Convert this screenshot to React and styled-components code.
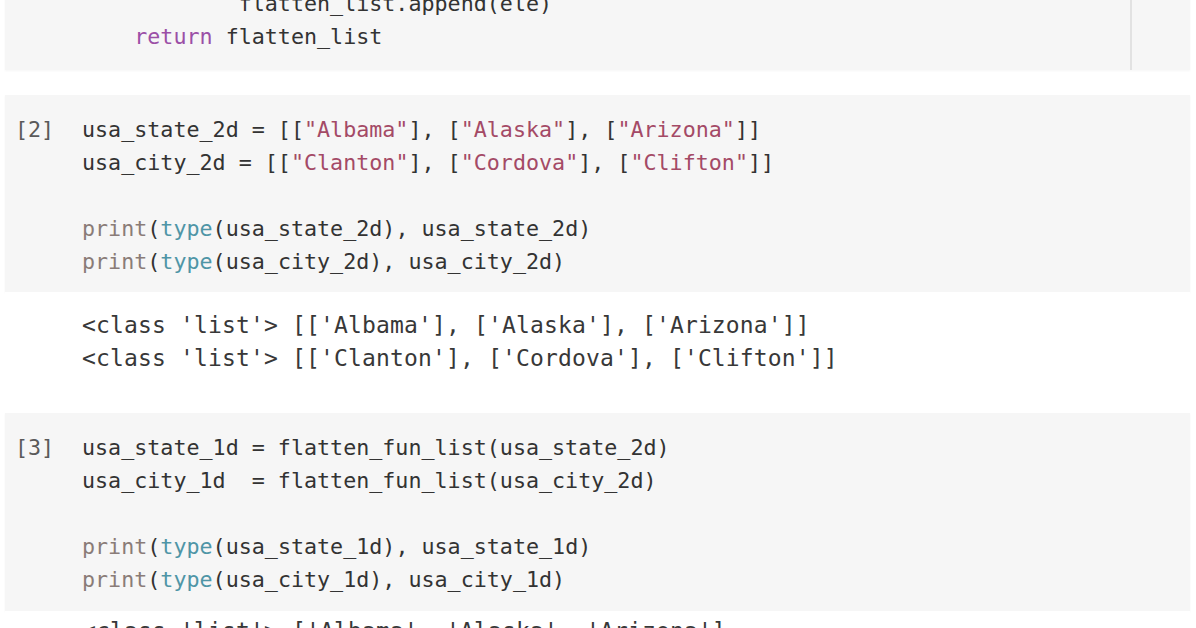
import React from 'react';
import styled, { createGlobalStyle } from 'styled-components';

const GlobalStyle = createGlobalStyle`
  html, body {
    margin: 0;
    padding: 0;
    background: #ffffff;
    overflow: hidden;
  }
`;

const Page = styled.div`
  width: 1196px;
  height: 628px;
  overflow: hidden;
  background: #ffffff;
  font-family: 'DejaVu Sans Mono', 'Liberation Mono', monospace;
  font-size: 21.7px;
  line-height: 33px;
  color: #333333;
`;

const Notebook = styled.div`
  margin-top: -13px;
  display: flex;
  flex-direction: column;
`;

const Cell = styled.div`
  display: flex;
  margin: ${p => p.$gap || 0}px 6px 0 5px;
  background: #f6f6f6;
  padding: ${p => p.$pt}px 0 ${p => p.$pb}px 0;
  box-shadow: 0 1px 2px rgba(0, 0, 0, 0.04);
`;

const Gutter = styled.div`
  width: 77px;
  flex-shrink: 0;
  padding-left: 10px;
  box-sizing: border-box;
  color: #5a5a5a;
`;

const Code = styled.pre`
  flex: 1;
  margin: 0;
  font: inherit;
  white-space: pre;
`;

const Rail = styled.div`
  width: 58px;
  flex-shrink: 0;
  margin-top: -20px;
  margin-bottom: -17px;
  border-left: 2px solid #e2e2e2;
`;

const Output = styled.pre`
  margin: 0 6px 0 5px;
  padding: ${p => p.$pt}px 0 ${p => p.$pb}px 77px;
  font-family: inherit;
  font-size: 23px;
  letter-spacing: 0.15px;
  line-height: 33px;
  white-space: pre;
  color: #383838;
  background: #ffffff;
`;

const Kw = styled.span`
  color: #9b4fa6;
`;

const Fn = styled.span`
  color: #8a7c78;
`;

const Ty = styled.span`
  color: #4f95a6;
`;

const Str = styled.span`
  color: #a44a66;
`;

function App() {
  return (
    <>
      <GlobalStyle />
      <Page>
        <Notebook>
          <Cell $pt={0} $pb={17}>
            <Gutter />
            <Code>
{`            flatten_list.append(ele)
`}    <Kw>return</Kw>{` flatten_list`}
            </Code>
            <Rail />
          </Cell>

          <Cell $gap={25} $pt={18} $pb={14}>
            <Gutter>[2]</Gutter>
            <Code>
{`usa_state_2d = [[`}<Str>"Albama"</Str>{`], [`}<Str>"Alaska"</Str>{`], [`}<Str>"Arizona"</Str>{`]]
usa_city_2d = [[`}<Str>"Clanton"</Str>{`], [`}<Str>"Cordova"</Str>{`], [`}<Str>"Clifton"</Str>{`]]

`}<Fn>print</Fn>(<Ty>type</Ty>{`(usa_state_2d), usa_state_2d)
`}<Fn>print</Fn>(<Ty>type</Ty>{`(usa_city_2d), usa_city_2d)`}
            </Code>
          </Cell>

          <Output $pt={17} $pb={38}>
{`<class 'list'> [['Albama'], ['Alaska'], ['Arizona']]
<class 'list'> [['Clanton'], ['Cordova'], ['Clifton']]`}
          </Output>

          <Cell $pt={18} $pb={15}>
            <Gutter>[3]</Gutter>
            <Code>
{`usa_state_1d = flatten_fun_list(usa_state_2d)
usa_city_1d  = flatten_fun_list(usa_city_2d)

`}<Fn>print</Fn>(<Ty>type</Ty>{`(usa_state_1d), usa_state_1d)
`}<Fn>print</Fn>(<Ty>type</Ty>{`(usa_city_1d), usa_city_1d)`}
            </Code>
          </Cell>

          <Output $pt={4} $pb={20}>
{`<class 'list'> ['Albama', 'Alaska', 'Arizona']
<class 'list'> ['Clanton', 'Cordova', 'Clifton']`}
          </Output>
        </Notebook>
      </Page>
    </>
  );
}

export default App;
